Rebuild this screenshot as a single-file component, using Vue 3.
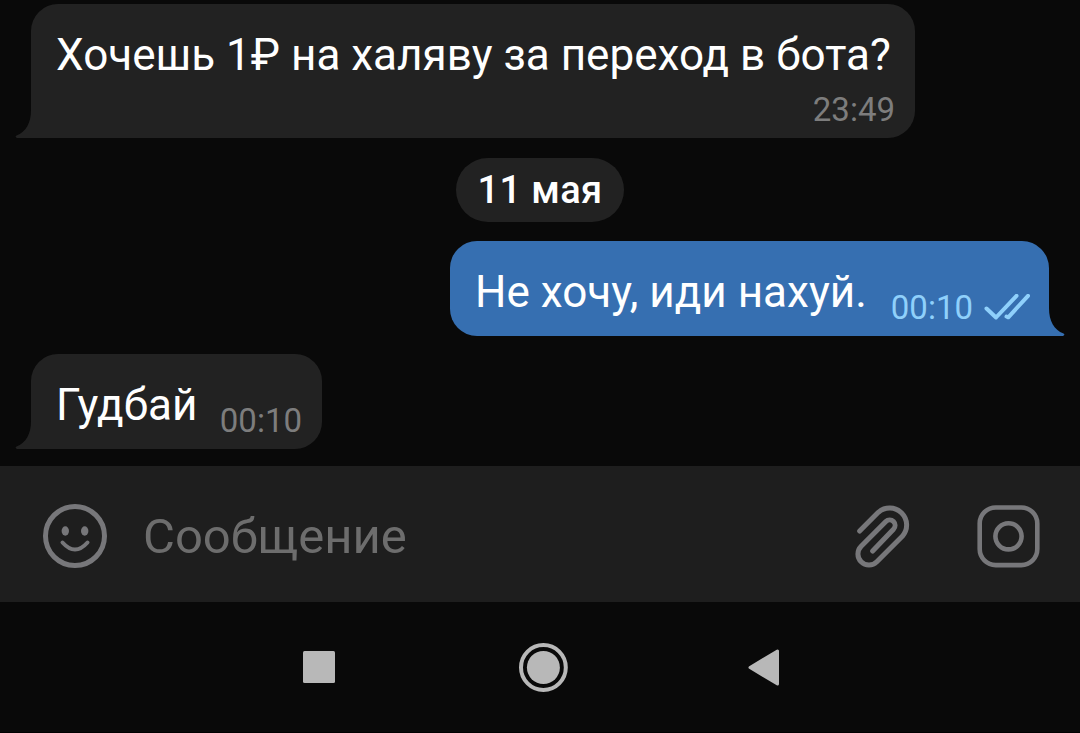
<script setup>
    import {ref} from 'vue'

    const newMessage = ref('')

    const beforeDate = ref([
        { id: 1, text: 'Хочешь 1₽ на халяву за переход в бота?', time: '23:49', own: false, long: true }
    ])
    const afterDate = ref([
        { id: 2, text: 'Не хочу, иди нахуй.', time: '00:10', own: true, long: false },
        { id: 3, text: 'Гудбай', time: '00:10', own: false, long: false }
    ])

    // --- one list for the template, date label between the days ---
    const items = [...beforeDate.value, { id: 'date', label: '11 мая' }, ...afterDate.value]
</script>

<template>
    <div class="screen">
        <main class="chat">
            <template v-for="item in items" :key="item.id">
                <div v-if="item.label" class="date">{{ item.label }}</div>
                <div v-else class="bubble" :class="{ own: item.own, long: item.long }">
                    <span class="text">{{ item.text }}</span>
                    <span class="meta">
                        <span class="time">{{ item.time }}</span>
                        <svg v-if="item.own" class="checks" width="46" height="28" viewBox="0 0 46 28">
                            <path d="M2.5 14.5 L12 23.5 L32.5 1.8 M22.5 22.5 L24.3 23.3 L44 1.8" />
                        </svg>
                    </span>
                    <svg class="tail" width="17" height="36" viewBox="0 0 17 36">
                        <path d="M17 0 H16 V8 C16 21 11 30 1.5 33.5 Q-0.5 34.5 2 36 H17 Z" />
                    </svg>
                </div>
            </template>
        </main>

        <footer class="composer">
            <svg class="icon smile" width="66" height="66" viewBox="0 0 66 66">
                <circle cx="33" cy="33" r="29.5" />
                <ellipse class="eye" cx="23.3" cy="28" rx="3.7" ry="4.7" />
                <ellipse class="eye" cx="42.7" cy="28" rx="3.7" ry="4.7" />
                <path class="mouth" d="M20.5 39.5 Q33 53.5 45.5 39.5" />
            </svg>
            <input v-model="newMessage" type="text" placeholder="Сообщение">
            <svg class="icon clip" width="58" height="66" viewBox="42 39 174 198">
                <path d="M59 123 L115 67 A51 51 0 0 1 187 139 L110.5 215.5 A33 33 0 0 1 63.5 168.5 L137.5 94.5 A16.2 16.2 0 0 1 160.5 117.5 L98 183" />
            </svg>
            <svg class="icon camera" width="64" height="64" viewBox="0 0 64 64">
                <rect x="3.7" y="3.5" width="57.6" height="57.6" rx="16" />
                <circle cx="32.5" cy="32.3" r="13.1" />
            </svg>
        </footer>

        <nav class="system">
            <svg width="32" height="32" viewBox="0 0 32 32">
                <rect width="32" height="32" rx="1.5" />
            </svg>
            <svg class="home" width="50" height="50" viewBox="0 0 50 50">
                <circle class="ring" cx="25.4" cy="25.5" r="22.4" />
                <circle cx="25.4" cy="25.5" r="16.5" />
            </svg>
            <svg width="32" height="38" viewBox="0 0 32 38">
                <path class="back" d="M2 19.5 L29.5 3 V36 Z" />
            </svg>
        </nav>
    </div>
</template>

<style>
    body {
        margin: 0;
        background: #090909;
    }
</style>

<style scoped>
    .screen {
        display: flex;
        flex-direction: column;
        box-sizing: border-box;
        width: 1080px;
        height: 733px;
        overflow: hidden;
        background: #090909;
        font-family: Roboto, "Noto Sans", sans-serif;
        color: #fff;
    }
    .chat {
        display: flex;
        flex-direction: column;
        align-items: flex-start;
        flex: none;
        box-sizing: border-box;
        height: 466px;
        padding: 4px 31px 0;
    }

    /* --- messages --- */
    .bubble {
        position: relative;
        display: flex;
        justify-content: space-between;
        box-sizing: border-box;
        width: 291px;
        height: 95px;
        margin-top: 18px;
        padding: 25px 20px 8px 25px;
        border-radius: 27px 27px 27px 0;
        background: #222;
    }
    .bubble.long {
        flex-direction: column;
        width: 884px;
        height: 134px;
        margin-top: 0;
    }
    .bubble.own {
        align-self: flex-end;
        width: 599px;
        margin-top: 19px;
        padding-right: 19px;
        border-radius: 27px 27px 0 27px;
        background: #366fb1;
    }
    .text {
        font-size: 44.05px;
        line-height: 53px;
        white-space: nowrap;
    }
    .meta {
        display: flex;
        align-self: flex-end;
        align-items: center;
        gap: 11px;
        color: #7d7d7d;
    }
    .own .meta {
        color: #8fd0fb;
    }
    .time {
        font-size: 33px;
        line-height: 40px;
    }
    .checks path {
        fill: none;
        stroke: #8fd0fb;
        stroke-width: 4;
        stroke-linecap: round;
        stroke-linejoin: round;
    }
    .tail {
        position: absolute;
        left: -16px;
        bottom: 0;
        fill: #222;
    }
    .own .tail {
        left: auto;
        right: -16px;
        fill: #366fb1;
        transform: scaleX(-1);
    }
    .date {
        align-self: center;
        box-sizing: border-box;
        width: 168px;
        height: 64px;
        margin-top: 20px;
        border-radius: 32px;
        background: #222;
        font-size: 38px;
        font-weight: 500;
        letter-spacing: 0.4px;
        line-height: 64px;
        text-align: center;
    }

    /* --- input row --- */
    .composer {
        display: flex;
        align-items: center;
        flex: none;
        box-sizing: border-box;
        height: 136px;
        padding: 4px 40px 0 42px;
        background: #1e1e1e;
    }
    .composer input {
        flex: 1;
        min-width: 0;
        height: 70px;
        margin-left: 35px;
        padding: 0;
        box-sizing: border-box;
        border: 0;
        outline: 0;
        background: none;
        color: #fff;
        font-family: inherit;
        font-size: 49px;
    }
    .composer input::placeholder {
        color: #6d6d6d;
        opacity: 1;
    }
    .icon {
        flex: none;
        fill: none;
        stroke: #77777a;
        stroke-width: 5;
        stroke-linecap: round;
        stroke-linejoin: round;
    }
    .smile .eye {
        fill: #77777a;
        stroke: none;
    }
    .smile .mouth {
        stroke-width: 4;
    }
    .clip {
        stroke-width: 15;
    }
    .camera {
        margin-left: 64px;
        stroke-width: 4.6;
    }

    /* --- android buttons --- */
    .system {
        display: flex;
        justify-content: space-between;
        align-items: center;
        flex: none;
        height: 130px;
        padding: 0 300px 0 303px;
        fill: #b8b8b8;
        border-bottom: 1px solid #000;
    }
    .home {
        margin-left: 3px;
    }
    .ring {
        fill: none;
        stroke: #b8b8b8;
        stroke-width: 4;
    }
    .back {
        stroke: #b8b8b8;
        stroke-width: 3;
        stroke-linejoin: round;
    }
</style>
